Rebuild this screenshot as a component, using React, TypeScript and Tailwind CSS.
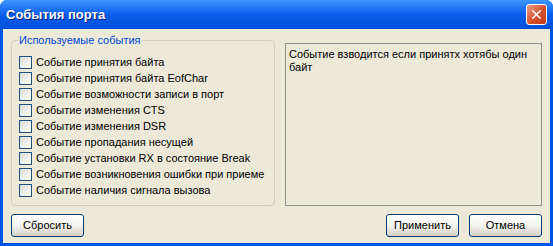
import { X } from 'lucide-react';

const events = [
  'Событие принятия байта',
  'Событие принятия байта EofChar',
  'Событие возможности записи в порт',
  'Событие изменения CTS',
  'Событие изменения DSR',
  'Событие пропадания несущей',
  'Событие установки RX в состояние Break',
  'Событие возникновения ошибки при приеме',
  'Событие наличия сигнала вызова',
];

function XpButton({ label }: { label: string }) {
  return (
    <button className="w-[73px] h-[23px] rounded-[3px] border border-[#003C74] bg-gradient-to-b from-[#FFFFFF] via-[#F4F4F0] to-[#D6D0C5] text-[11px] text-black leading-none">
      {label}
    </button>
  );
}

export default function App() {
  return (
    <div
      className="w-[553px] h-[246px] flex flex-col bg-[#0054E3] rounded-t-[7px] overflow-hidden"
      style={{ fontFamily: '"Liberation Sans", Tahoma, sans-serif' }}
    >
      <div className="h-[29px] flex items-center justify-between pl-[6px] pr-[6px] bg-gradient-to-b from-[#3D95FF] via-[#0A5EEB] to-[#0050DA]">
        <span className="text-white font-bold text-[13px] [text-shadow:1px_1px_0_#0A1E80]">
          События порта
        </span>
        <div className="w-[21px] h-[21px] rounded-[3px] border border-white bg-gradient-to-br from-[#E9A08A] via-[#D9532F] to-[#C23B14] flex items-center justify-center">
          <X className="w-[15px] h-[15px] text-white" strokeWidth={2.6} />
        </div>
      </div>
      <div className="flex-1 mx-[3px] mb-[3px] bg-[#ECE9D8] flex flex-col px-[8px] pb-[6px]">
        <div className="flex gap-[10px] h-[177px]">
          <fieldset className="w-[264px] border border-[#D0D0BF] rounded-[4px] pl-[7px] pt-[7px] mt-[5px]">
            <legend className="text-[11px] text-[#0046D5] px-[1px] ml-[-1px] leading-[13px]">
              Используемые события
            </legend>
            <div className="flex flex-col">
              {events.map((e) => (
                <div key={e} className="flex items-center h-[16px] gap-[4px]">
                  <div className="w-[13px] h-[13px] border border-[#1C5180] bg-gradient-to-br from-[#DCDCD7] to-[#FFFFFF]" />
                  <span className="text-[11px] text-black leading-none">{e}</span>
                </div>
              ))}
            </div>
          </fieldset>
          <div className="flex-1 mt-[14px] border border-[#8E8F8F] px-[3px] py-[4px] text-[11px] text-black leading-[13px]">
            Событие взводится если принятх хотябы один байт
          </div>
        </div>
        <div className="flex items-center justify-between mt-[8px]">
          <XpButton label="Сбросить" />
          <div className="flex gap-[10px]">
            <XpButton label="Применить" />
            <XpButton label="Отмена" />
          </div>
        </div>
      </div>
    </div>
  );
}
